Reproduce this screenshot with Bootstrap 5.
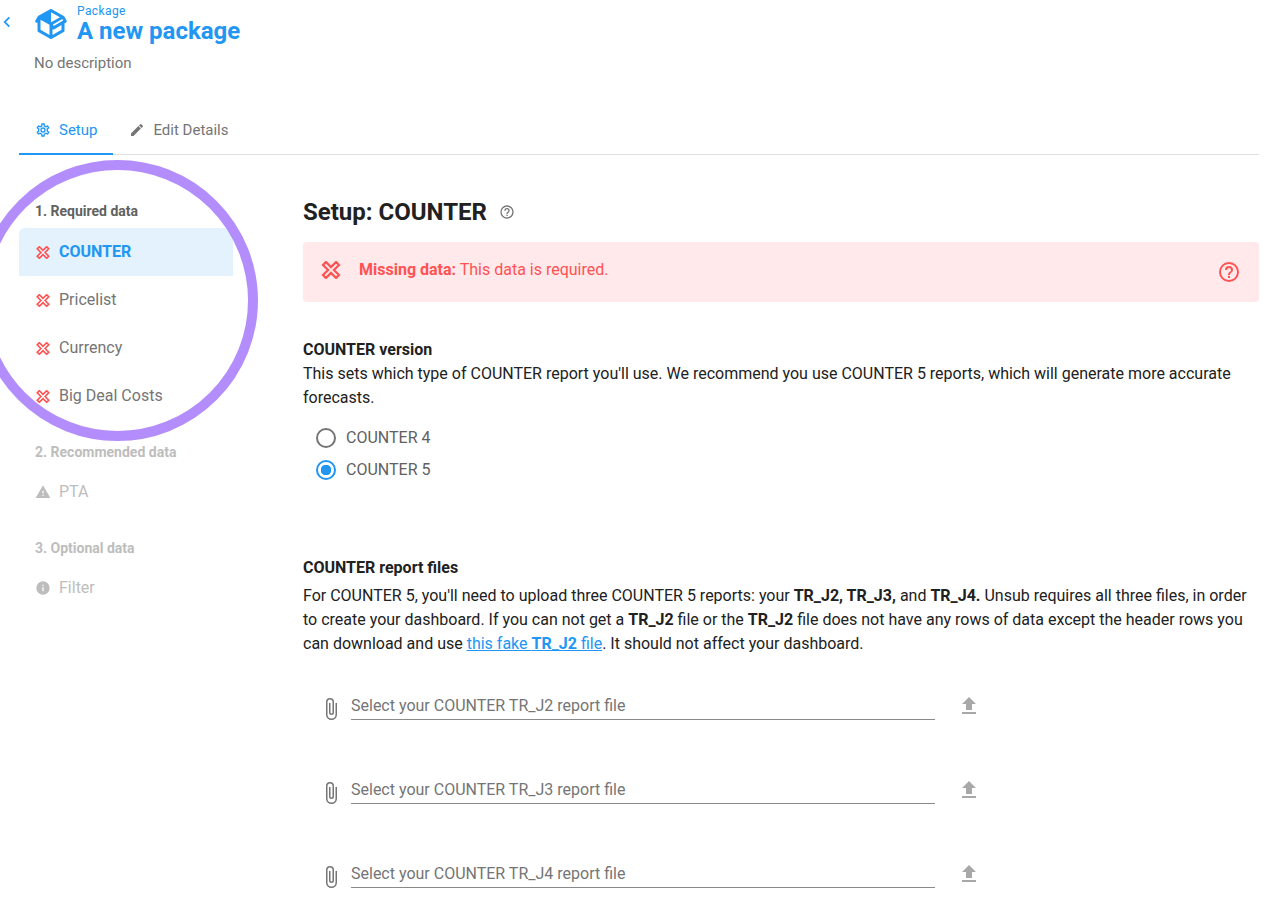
<!DOCTYPE html>
<html lang="en">
<head>
    <meta charset="UTF-8">
    <meta name="viewport" content="width=device-width, initial-scale=1.0">
    <title>A new package</title>
    <link rel="stylesheet" href="https://cdn.jsdelivr.net/npm/bootstrap@5.3.0/dist/css/bootstrap.min.css">
    <style>
        html, body { overflow: hidden; height: 909px; }
        body {
            font-family: Roboto, "Liberation Sans", sans-serif;
            font-size: 16px;
            line-height: 24px;
            color: #212121;
            background: #fff;
            position: relative;
        }
        .ic { fill: currentColor; display: block; flex: none; }
        .blue { color: #2196f3; }
        .grey-txt { color: #757575; }
        .red-x { color: #ff5252; }
        .page-head { height: 107px; }
        .back-btn { width: 15px; padding-top: 14px; }
        .pkg-wrap { padding-left: 18px; padding-top: 6px; }
        .pkg-label { font-size: 12px; line-height: 14px; letter-spacing: .4px; padding-top: 4px; }
        .pkg-title { font-size: 24px; line-height: 26px; font-weight: 700; margin: 0; }
        .pkg-desc { margin: 9px 0 0 34px; font-size: 15px; line-height: 20px; }
        .tab-bar { margin: 0 11px 0 19px; height: 48px; border-bottom: 1px solid #e0e0e0; }
        .tab-item { display: flex; align-items: center; gap: 8px; height: 48px; padding: 0 16px; font-size: 15px; color: #757575; text-decoration: none; border-bottom: 2px solid transparent; }
        .tab-item.on { color: #2196f3; border-bottom-color: #2196f3; }
        .side-col { width: 303px; flex: none; padding: 47px 0 0 19px; }
        .side-head { font-size: 14px; font-weight: 700; line-height: 18px; color: #616161; padding-left: 16px; margin-bottom: 8px; }
        .side-list { width: 214px; margin-bottom: 23px; }
        .side-item { height: 48px; display: flex; align-items: center; padding: 0 16px; gap: 8px; color: #757575; font-size: 16px; border: 0; border-radius: 0; background: none; }
        .side-item.on { background: #e3f2fd; color: #2196f3; font-weight: 700; }
        .side-off .side-head { color: #bdbdbd; margin-bottom: 7px; }
        .side-off .side-item { color: #bdbdbd; }
        .ring { position: absolute; left: -23px; top: 160px; width: 281px; height: 281px; border: 10px solid #b38dfb; border-radius: 50%; pointer-events: none; }
        .main-col { width: 956px; flex: none; padding-top: 42px; }
        .setup-title { font-size: 24px; line-height: 30px; font-weight: 700; margin: 0 0 15px; }
        .miss-box { height: 60px; background: #ffe9ea; color: #ff5252; border: 0; border-radius: 4px; margin-bottom: 36px; padding: 0 18px; font-size: 16px; }
        .miss-text { margin-left: 18px; padding-bottom: 5px; }
        .miss-x { margin-bottom: 4px; }
        .sect-title { font-weight: 700; }
        .radio-row { height: 32px; padding-left: 13px; gap: 10px; color: #616161; }
        .radio-dot { width: 20px; height: 20px; border-radius: 50%; border: 2px solid #757575; flex: none; background: #fff; margin: 0; appearance: none; }
        .radio-dot:checked { border-color: #2196f3; background: radial-gradient(circle, #2196f3 0 5px, #fff 5.5px); }
        .radio-group { margin: 12px 0 70px; }
        .body-copy { margin: 4px 0 38px; }
        .body-copy a { color: #2196f3; }
        .upload-row { height: 84px; padding-left: 16px; width: 680px; }
        .clip-ic { margin-top: 3px; }
        .file-field { width: 584px; margin-left: 8px; height: 26px; border-bottom: 1px solid #8a8a8a; color: #757575; line-height: 24px; }
        .up-ic { margin: 0 0 0 22px; color: #a8a8a8; }
    </style>
</head>
<body>
    <div class="page-head">
        <div class="d-flex">
            <a href="#" class="back-btn blue">
                <svg class="ic" width="14" height="16" viewBox="4 4 16 16" aria-hidden="true"><path d="M15.41,16.58L10.83,12L15.41,7.41L14,6L8,12L14,18L15.41,16.58Z"/></svg>
            </a>
            <div class="pkg-wrap blue">
                <svg class="ic" width="36" height="36" viewBox="0 0 24 24" aria-hidden="true"><path d="M2,10.96C1.5,10.68 1.35,10.07 1.63,9.59L3.13,7C3.24,6.8 3.41,6.66 3.6,6.58L11.43,2.18C11.59,2.06 11.79,2 12,2C12.21,2 12.41,2.06 12.57,2.18L20.47,6.62C20.66,6.72 20.82,6.88 20.91,7.08L22.36,9.6C22.64,10.08 22.47,10.69 22,10.96L21,11.54V16.5C21,16.88 20.79,17.21 20.47,17.38L12.57,21.82C12.41,21.94 12.21,22 12,22C11.79,22 11.59,21.94 11.43,21.82L3.53,17.38C3.21,17.21 3,16.88 3,16.5V10.96C2.7,11.13 2.32,11.14 2,10.96M12,4.15V4.15L12,10.85V10.85L17.96,7.5L12,4.15M5,15.91L11,19.29V12.58L5,9.21V15.91M19,15.91V12.69L14,15.6C13.67,15.79 13.29,15.78 13,15.61V19.29L19,15.91M13.85,13.36L20.13,9.73L19.55,8.72L13.27,12.35L13.85,13.36Z"/></svg>
            </div>
            <div class="ms-2 blue">
                <div class="pkg-label">Package</div>
                <h1 class="pkg-title">A new package</h1>
            </div>
        </div>
        <p class="pkg-desc grey-txt">No description</p>
    </div>

    <nav class="nav tab-bar">
        <a class="tab-item on" href="#">
            <svg class="ic" width="16" height="16" viewBox="0 0 24 24" aria-hidden="true"><path d="M12,8A4,4 0 0,1 16,12A4,4 0 0,1 12,16A4,4 0 0,1 8,12A4,4 0 0,1 12,8M12,10A2,2 0 0,0 10,12A2,2 0 0,0 12,14A2,2 0 0,0 14,12A2,2 0 0,0 12,10M10,22C9.75,22 9.54,21.82 9.5,21.58L9.13,18.93C8.5,18.68 7.96,18.34 7.44,17.94L4.95,18.95C4.73,19.03 4.46,18.95 4.34,18.73L2.34,15.27C2.21,15.05 2.27,14.78 2.46,14.63L4.57,12.97L4.5,12L4.57,11L2.46,9.37C2.27,9.22 2.21,8.95 2.34,8.73L4.34,5.27C4.46,5.05 4.73,4.96 4.95,5.05L7.44,6.05C7.96,5.66 8.5,5.32 9.13,5.07L9.5,2.42C9.54,2.18 9.75,2 10,2H14C14.25,2 14.46,2.18 14.5,2.42L14.87,5.07C15.5,5.32 16.04,5.66 16.56,6.05L19.05,5.05C19.27,4.96 19.54,5.05 19.66,5.27L21.66,8.73C21.79,8.95 21.73,9.22 21.54,9.37L19.43,11L19.5,12L19.43,13L21.54,14.63C21.73,14.78 21.79,15.05 21.66,15.27L19.66,18.73C19.54,18.95 19.27,19.04 19.05,18.95L16.56,17.95C16.04,18.34 15.5,18.68 14.87,18.93L14.5,21.58C14.46,21.82 14.25,22 14,22H10M11.25,4L10.88,6.61C9.68,6.86 8.62,7.5 7.85,8.39L5.44,7.35L4.69,8.65L6.8,10.2C6.4,11.37 6.4,12.64 6.8,13.8L4.68,15.36L5.43,16.66L7.86,15.62C8.63,16.5 9.68,17.14 10.87,17.38L11.24,20H12.76L13.13,17.39C14.32,17.14 15.37,16.5 16.14,15.62L18.57,16.66L19.32,15.36L17.2,13.81C17.6,12.64 17.6,11.37 17.2,10.2L19.31,8.65L18.56,7.35L16.15,8.39C15.38,7.5 14.32,6.86 13.12,6.62L12.75,4H11.25Z"/></svg>
            Setup
        </a>
        <a class="tab-item" href="#">
            <svg class="ic" width="16" height="16" viewBox="0 0 24 24" aria-hidden="true"><path d="M20.71,7.04C21.1,6.65 21.1,6 20.71,5.63L18.37,3.29C18,2.9 17.35,2.9 16.96,3.29L15.12,5.12L18.87,8.87M3,17.25V21H6.75L17.81,9.93L14.06,6.18L3,17.25Z"/></svg>
            Edit Details
        </a>
    </nav>

    <div class="d-flex">
        <aside class="side-col">
            <div class="side-head">1. Required data</div>
            <div class="list-group side-list">
                <div class="list-group-item side-item on"><svg class="ic red-x" width="16" height="13" viewBox="3 3 18 18" aria-hidden="true"><path fill="none" stroke="currentColor" stroke-width="2.2" d="M20 6.91L17.09 4L12 9.09L6.91 4L4 6.91L9.09 12L4 17.09L6.91 20L12 14.91L17.09 20L20 17.09L14.91 12L20 6.91Z"/></svg>COUNTER</div>
                <div class="list-group-item side-item"><svg class="ic red-x" width="16" height="13" viewBox="3 3 18 18" aria-hidden="true"><path fill="none" stroke="currentColor" stroke-width="2.2" d="M20 6.91L17.09 4L12 9.09L6.91 4L4 6.91L9.09 12L4 17.09L6.91 20L12 14.91L17.09 20L20 17.09L14.91 12L20 6.91Z"/></svg>Pricelist</div>
                <div class="list-group-item side-item"><svg class="ic red-x" width="16" height="13" viewBox="3 3 18 18" aria-hidden="true"><path fill="none" stroke="currentColor" stroke-width="2.2" d="M20 6.91L17.09 4L12 9.09L6.91 4L4 6.91L9.09 12L4 17.09L6.91 20L12 14.91L17.09 20L20 17.09L14.91 12L20 6.91Z"/></svg>Currency</div>
                <div class="list-group-item side-item"><svg class="ic red-x" width="16" height="13" viewBox="3 3 18 18" aria-hidden="true"><path fill="none" stroke="currentColor" stroke-width="2.2" d="M20 6.91L17.09 4L12 9.09L6.91 4L4 6.91L9.09 12L4 17.09L6.91 20L12 14.91L17.09 20L20 17.09L14.91 12L20 6.91Z"/></svg>Big Deal Costs</div>
            </div>
            <div class="side-off">
                <div class="side-head">2. Recommended data</div>
                <div class="list-group side-list">
                    <div class="list-group-item side-item"><svg class="ic" width="16" height="16" viewBox="0 0 24 24" aria-hidden="true"><path d="M13,14H11V10H13M13,18H11V16H13M1,21H23L12,2L1,21Z"/></svg>PTA</div>
                </div>
                <div class="side-head">3. Optional data</div>
                <div class="list-group side-list">
                    <div class="list-group-item side-item"><svg class="ic" width="16" height="16" viewBox="0 0 24 24" aria-hidden="true"><path d="M13,9H11V7H13M13,17H11V11H13M12,2A10,10 0 0,0 2,12A10,10 0 0,0 12,22A10,10 0 0,0 22,12A10,10 0 0,0 12,2Z"/></svg>Filter</div>
                </div>
            </div>
        </aside>

        <main class="main-col">
            <h2 class="setup-title d-flex align-items-center gap-2">Setup: COUNTER
                <svg class="ic grey-txt ms-1" width="16" height="16" viewBox="0 0 24 24" aria-hidden="true"><path d="M11,18H13V16H11V18M12,2A10,10 0 0,0 2,12A10,10 0 0,0 12,22A10,10 0 0,0 22,12A10,10 0 0,0 12,2M12,20C7.59,20 4,16.41 4,12C4,7.59 7.59,4 12,4C16.41,4 20,7.59 20,12C20,16.41 16.41,20 12,20M12,6A4,4 0 0,0 8,10H10A2,2 0 0,1 12,8A2,2 0 0,1 14,10C14,12 11,11.75 11,15H13C13,12.75 16,12.5 16,10A4,4 0 0,0 12,6Z"/></svg>
            </h2>

            <div class="alert miss-box d-flex align-items-center" role="alert">
                <svg class="ic miss-x" width="20" height="18" viewBox="3 3 18 18" aria-hidden="true"><path fill="none" stroke="currentColor" stroke-width="2.2" d="M20 6.91L17.09 4L12 9.09L6.91 4L4 6.91L9.09 12L4 17.09L6.91 20L12 14.91L17.09 20L20 17.09L14.91 12L20 6.91Z"/></svg>
                <span class="miss-text flex-grow-1"><strong>Missing data:</strong> This data is required.</span>
                <svg class="ic" width="24" height="24" viewBox="0 0 24 24" aria-hidden="true"><path d="M11,18H13V16H11V18M12,2A10,10 0 0,0 2,12A10,10 0 0,0 12,22A10,10 0 0,0 22,12A10,10 0 0,0 12,2M12,20C7.59,20 4,16.41 4,12C4,7.59 7.59,4 12,4C16.41,4 20,7.59 20,12C20,16.41 16.41,20 12,20M12,6A4,4 0 0,0 8,10H10A2,2 0 0,1 12,8A2,2 0 0,1 14,10C14,12 11,11.75 11,15H13C13,12.75 16,12.5 16,10A4,4 0 0,0 12,6Z"/></svg>
            </div>

            <div class="sect-title">COUNTER version</div>
            <p class="mb-0">This sets which type of COUNTER report you'll use. We recommend you use COUNTER 5 reports, which will generate more accurate forecasts.</p>
            <div class="radio-group">
                <label class="d-flex align-items-center radio-row"><input class="radio-dot" type="radio" name="cv">COUNTER 4</label>
                <label class="d-flex align-items-center radio-row"><input class="radio-dot" type="radio" name="cv" checked>COUNTER 5</label>
            </div>

            <div class="sect-title">COUNTER report files</div>
            <p class="body-copy">For COUNTER 5, you'll need to upload three COUNTER 5 reports: your <strong>TR_J2, TR_J3,</strong> and <strong>TR_J4.</strong> Unsub requires all three files, in order to create your dashboard. If you can not get a <strong>TR_J2</strong> file or the <strong>TR_J2</strong> file does not have any rows of data except the header rows you can download and use <a href="#">this fake <strong>TR_J2</strong> file</a>. It should not affect your dashboard.</p>

            <div class="d-flex align-items-start upload-row">
                <svg class="ic grey-txt clip-ic" width="24" height="24" viewBox="0 0 24 24" aria-hidden="true"><path d="M16.5,6V17.5A4,4 0 0,1 12.5,21.5A4,4 0 0,1 8.5,17.5V5A2.5,2.5 0 0,1 11,2.5A2.5,2.5 0 0,1 13.5,5V15.5A1,1 0 0,1 12.5,16.5A1,1 0 0,1 11.500,15.5V6H10V15.5A2.5,2.5 0 0,0 12.5,18A2.5,2.5 0 0,0 15,15.5V5A4,4 0 0,0 11,1A4,4 0 0,0 7,5V17.5A5.5,5.5 0 0,0 12.5,23A5.5,5.5 0 0,0 18,17.5V6H16.5Z"/></svg>
                <div class="file-field">Select your COUNTER TR_J2 report file</div>
                <svg class="ic up-ic" width="24" height="24" viewBox="0 0 24 24" aria-hidden="true"><path d="M9,16V10H5L12,3L19,10H15V16H9M5,20V18H19V20H5Z"/></svg>
            </div>
            <div class="d-flex align-items-start upload-row">
                <svg class="ic grey-txt clip-ic" width="24" height="24" viewBox="0 0 24 24" aria-hidden="true"><path d="M16.5,6V17.5A4,4 0 0,1 12.5,21.5A4,4 0 0,1 8.5,17.5V5A2.5,2.5 0 0,1 11,2.5A2.5,2.5 0 0,1 13.5,5V15.5A1,1 0 0,1 12.5,16.5A1,1 0 0,1 11.500,15.5V6H10V15.5A2.5,2.5 0 0,0 12.5,18A2.5,2.5 0 0,0 15,15.5V5A4,4 0 0,0 11,1A4,4 0 0,0 7,5V17.5A5.5,5.5 0 0,0 12.5,23A5.5,5.5 0 0,0 18,17.5V6H16.5Z"/></svg>
                <div class="file-field">Select your COUNTER TR_J3 report file</div>
                <svg class="ic up-ic" width="24" height="24" viewBox="0 0 24 24" aria-hidden="true"><path d="M9,16V10H5L12,3L19,10H15V16H9M5,20V18H19V20H5Z"/></svg>
            </div>
            <div class="d-flex align-items-start upload-row">
                <svg class="ic grey-txt clip-ic" width="24" height="24" viewBox="0 0 24 24" aria-hidden="true"><path d="M16.5,6V17.5A4,4 0 0,1 12.5,21.5A4,4 0 0,1 8.5,17.5V5A2.5,2.5 0 0,1 11,2.5A2.5,2.5 0 0,1 13.5,5V15.5A1,1 0 0,1 12.5,16.5A1,1 0 0,1 11.500,15.5V6H10V15.5A2.5,2.5 0 0,0 12.5,18A2.5,2.5 0 0,0 15,15.5V5A4,4 0 0,0 11,1A4,4 0 0,0 7,5V17.5A5.5,5.5 0 0,0 12.5,23A5.5,5.5 0 0,0 18,17.5V6H16.5Z"/></svg>
                <div class="file-field">Select your COUNTER TR_J4 report file</div>
                <svg class="ic up-ic" width="24" height="24" viewBox="0 0 24 24" aria-hidden="true"><path d="M9,16V10H5L12,3L19,10H15V16H9M5,20V18H19V20H5Z"/></svg>
            </div>
        </main>
    </div>

    <div class="ring"></div>
    <script src="https://cdn.jsdelivr.net/npm/bootstrap@5.3.0/dist/js/bootstrap.bundle.min.js"></script>
</body>
</html>
